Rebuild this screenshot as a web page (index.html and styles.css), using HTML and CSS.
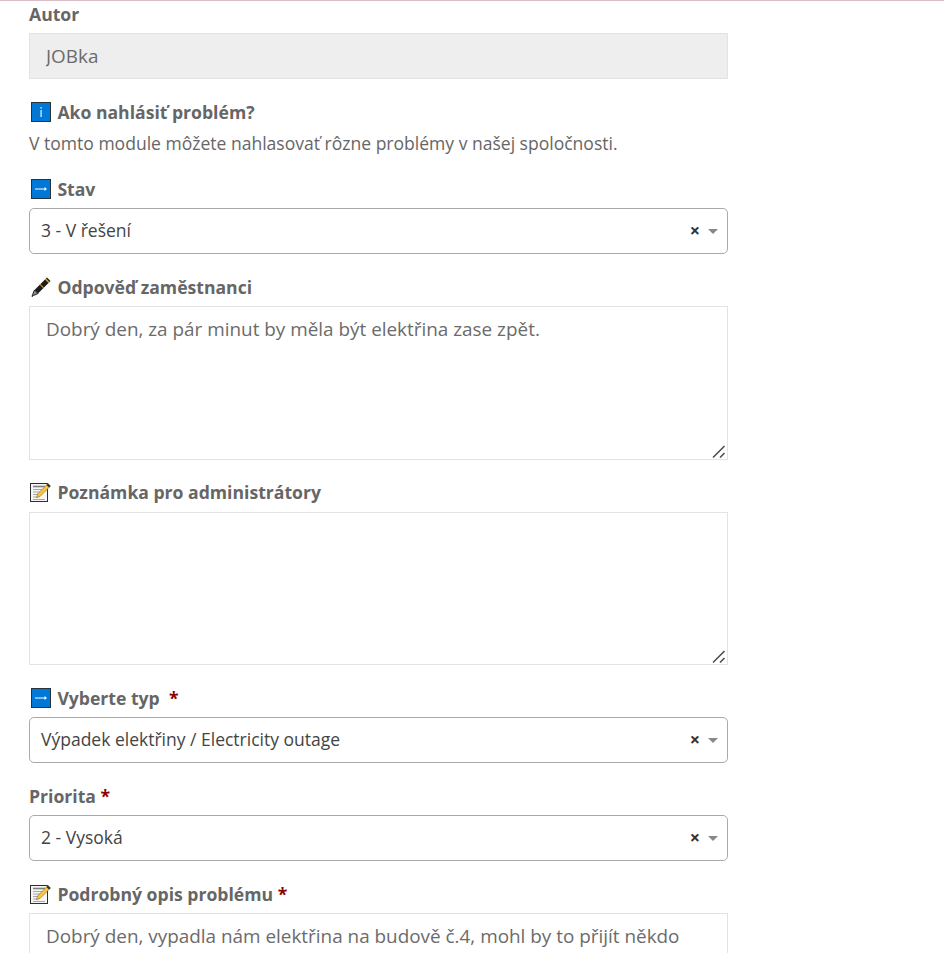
FILE: index.html
```html
<!DOCTYPE html>
<html lang="sk">

<head>
    <meta charset="UTF-8">
    <meta name="viewport" content="width=device-width, initial-scale=1.0">
    <title>Nahlásenie problému</title>
    <link rel="stylesheet" href="styles.css">
</head>

<body>

    <svg class="sprites" width="0" height="0" aria-hidden="true">
        <symbol id="icon-info" viewBox="0 0 20 20">
            <rect x="0.5" y="0.5" width="19" height="19" fill="#0078d7" stroke="#26323c" />
            <rect x="9.4" y="5" width="1.4" height="1.6" fill="#cfe6f8" />
            <rect x="9.4" y="8" width="1.4" height="7" fill="#cfe6f8" />
        </symbol>
        <symbol id="icon-arrow" viewBox="0 0 20 20">
            <rect x="0.5" y="0.5" width="19" height="19" fill="#0078d7" stroke="#26323c" />
            <path d="M4 9.5h11v1H4z" fill="#fff" />
            <path d="M13.5 8l2.5 2-2.5 2z" fill="#fff" />
        </symbol>
        <symbol id="icon-pen" viewBox="0 0 20 20">
            <path d="M16 0.5l3.5 3.5L7 16.5 3.5 13z" fill="#1c1c1c" />
            <path d="M15 1.5l3.5 3.5-1 1L14 2.5z" fill="#e0a92e" />
            <path d="M9.5 7l3.5 3.5-.8.8-3.5-3.5z" fill="#c9962a" />
            <path d="M3.5 13L7 16.5 2.5 18.5 1 19.5l.6-2z" fill="#8c8c8c" stroke="#1c1c1c" />
        </symbol>
        <symbol id="icon-memo" viewBox="0 0 21 20">
            <rect x="0.5" y="1.5" width="17" height="18" fill="#f6f6f6" stroke="#2e2e2e" />
            <path d="M3 4.5h12" stroke="#7f7f7f" stroke-width="1.6" fill="none" />
            <path d="M3 7.5h12M3 10h10M3 12.5h7M3 15h5M3 17.5h12" stroke="#a8a8a8" fill="none" />
            <path d="M18 1.5l2.5 2.5L10 14.5l-3.5 1.2L7.5 12z" fill="#f7c63c" stroke="#8a6f1e" stroke-width="0.6" />
            <path d="M18 1.5l2.5 2.5-1.5 1.5-2.5-2.5z" fill="#2e2e2e" />
        </symbol>
    </svg>

    <form class="ticket-form">
        <div class="field field-author">
            <label class="field-label" for="author">Autor</label>
            <input class="text-input" type="text" id="author" value="JOBka" disabled>
        </div>

        <div class="field">
            <div class="field-label"><svg class="icon"><use href="#icon-info" /></svg>Ako nahlásiť problém?</div>
            <p class="help-text">V tomto module môžete nahlasovať rôzne problémy v našej spoločnosti.</p>
        </div>

        <div class="field">
            <div class="field-label"><svg class="icon"><use href="#icon-arrow" /></svg>Stav</div>
            <div class="select-box">
                <span class="select-value">3 - V řešení</span>
                <span class="select-clear">×</span>
                <span class="select-caret"></span>
            </div>
        </div>

        <div class="field">
            <label class="field-label" for="answer"><svg class="icon"><use href="#icon-pen" /></svg>Odpověď zaměstnanci</label>
            <div class="area-wrap">
                <textarea class="text-area" id="answer">Dobrý den, za pár minut by měla být elektřina zase zpět.</textarea>
                <svg class="area-grip" viewBox="0 0 14 13"><path d="M1 12.5L12.5 1M8 12.5l4.5-4.5" /></svg>
            </div>
        </div>

        <div class="field">
            <label class="field-label" for="note"><svg class="icon icon-memo"><use href="#icon-memo" /></svg>Poznámka pro administrátory</label>
            <div class="area-wrap">
                <textarea class="text-area" id="note"></textarea>
                <svg class="area-grip" viewBox="0 0 14 13"><path d="M1 12.5L12.5 1M8 12.5l4.5-4.5" /></svg>
            </div>
        </div>

        <div class="field">
            <div class="field-label"><svg class="icon"><use href="#icon-arrow" /></svg>Vyberte typ&nbsp; <span class="required">*</span></div>
            <div class="select-box">
                <span class="select-value">Výpadek elektřiny / Electricity outage</span>
                <span class="select-clear">×</span>
                <span class="select-caret"></span>
            </div>
        </div>

        <div class="field">
            <div class="field-label">Priorita <span class="required">*</span></div>
            <div class="select-box">
                <span class="select-value">2 - Vysoká</span>
                <span class="select-clear">×</span>
                <span class="select-caret"></span>
            </div>
        </div>

        <div class="field">
            <label class="field-label" for="detail"><svg class="icon icon-memo"><use href="#icon-memo" /></svg>Podrobný opis problému <span class="required">*</span></label>
            <div class="area-wrap">
                <textarea class="text-area" id="detail">Dobrý den, vypadla nám elektřina na budově č.4, mohl by to přijít někdo zkontrolovat?</textarea>
                <svg class="area-grip" viewBox="0 0 14 13"><path d="M1 12.5L12.5 1M8 12.5l4.5-4.5" /></svg>
            </div>
        </div>
    </form>

</body>

</html>
```

FILE: styles.css
```css
html,
body {
    height: 953px;
    overflow: hidden;
}

body {
    font-family: 'Open Sans', sans-serif;
    background-color: #ffffff;
    color: #666666;
    margin: 0;
    border-top: 1px solid #d8bcc6;
    box-sizing: border-box;
}

.sprites {
    position: absolute;
}

.ticket-form {
    width: 699px;
    margin-left: 29px;
    display: flex;
    flex-direction: column;
    gap: 21px;
}

.field {
    display: flex;
    flex-direction: column;
}

.field-author {
    margin-top: 1px;
}

.field-label {
    display: flex;
    align-items: center;
    white-space: pre-wrap;
    height: 23px;
    margin-bottom: 8px;
    font-size: 17.6px;
    font-weight: 700;
    color: #666666;
}

.icon {
    width: 20px;
    height: 20px;
    margin-left: 2px;
    margin-right: 6.4px;
    flex: none;
}

.icon-memo {
    width: 21px;
    margin-left: 1px;
}

.required {
    color: #8b0000;
}

.help-text {
    margin: 0;
    font-size: 17.55px;
    line-height: 25px;
}

.text-input {
    height: 46px;
    padding: 0 16px;
    box-sizing: border-box;
    border: 1px solid #e3e3e3;
    background-color: #eeeeee;
    font-family: inherit;
    font-size: 18.9px;
    color: #6b6b6b;
}

.area-wrap {
    position: relative;
    display: flex;
}

.text-area {
    width: 100%;
    height: 153.6px;
    padding: 8px 16px;
    box-sizing: border-box;
    border: 1px solid #e3e3e3;
    background-color: #ffffff;
    font-family: inherit;
    font-size: 18.9px;
    line-height: 28px;
    color: #6b6b6b;
    outline: none;
    resize: none;
}

.area-grip {
    position: absolute;
    right: 2px;
    bottom: 2px;
    width: 14px;
    height: 13px;
    fill: none;
    stroke: #4a4a4a;
    stroke-width: 1.5;
}

.select-box {
    display: flex;
    align-items: center;
    height: 46px;
    padding: 0 9px 2px 11px;
    box-sizing: border-box;
    border: 1px solid #aaaaaa;
    border-radius: 5px;
    font-size: 17.5px;
    color: #444444;
}

.select-value {
    flex: 1;
}

.select-clear {
    font-size: 18px;
    font-weight: 700;
    color: #333333;
    margin-right: 8px;
}

.select-caret {
    width: 0;
    height: 0;
    margin-top: 3px;
    border-left: 5px solid transparent;
    border-right: 5px solid transparent;
    border-top: 5px solid #888888;
}
```
